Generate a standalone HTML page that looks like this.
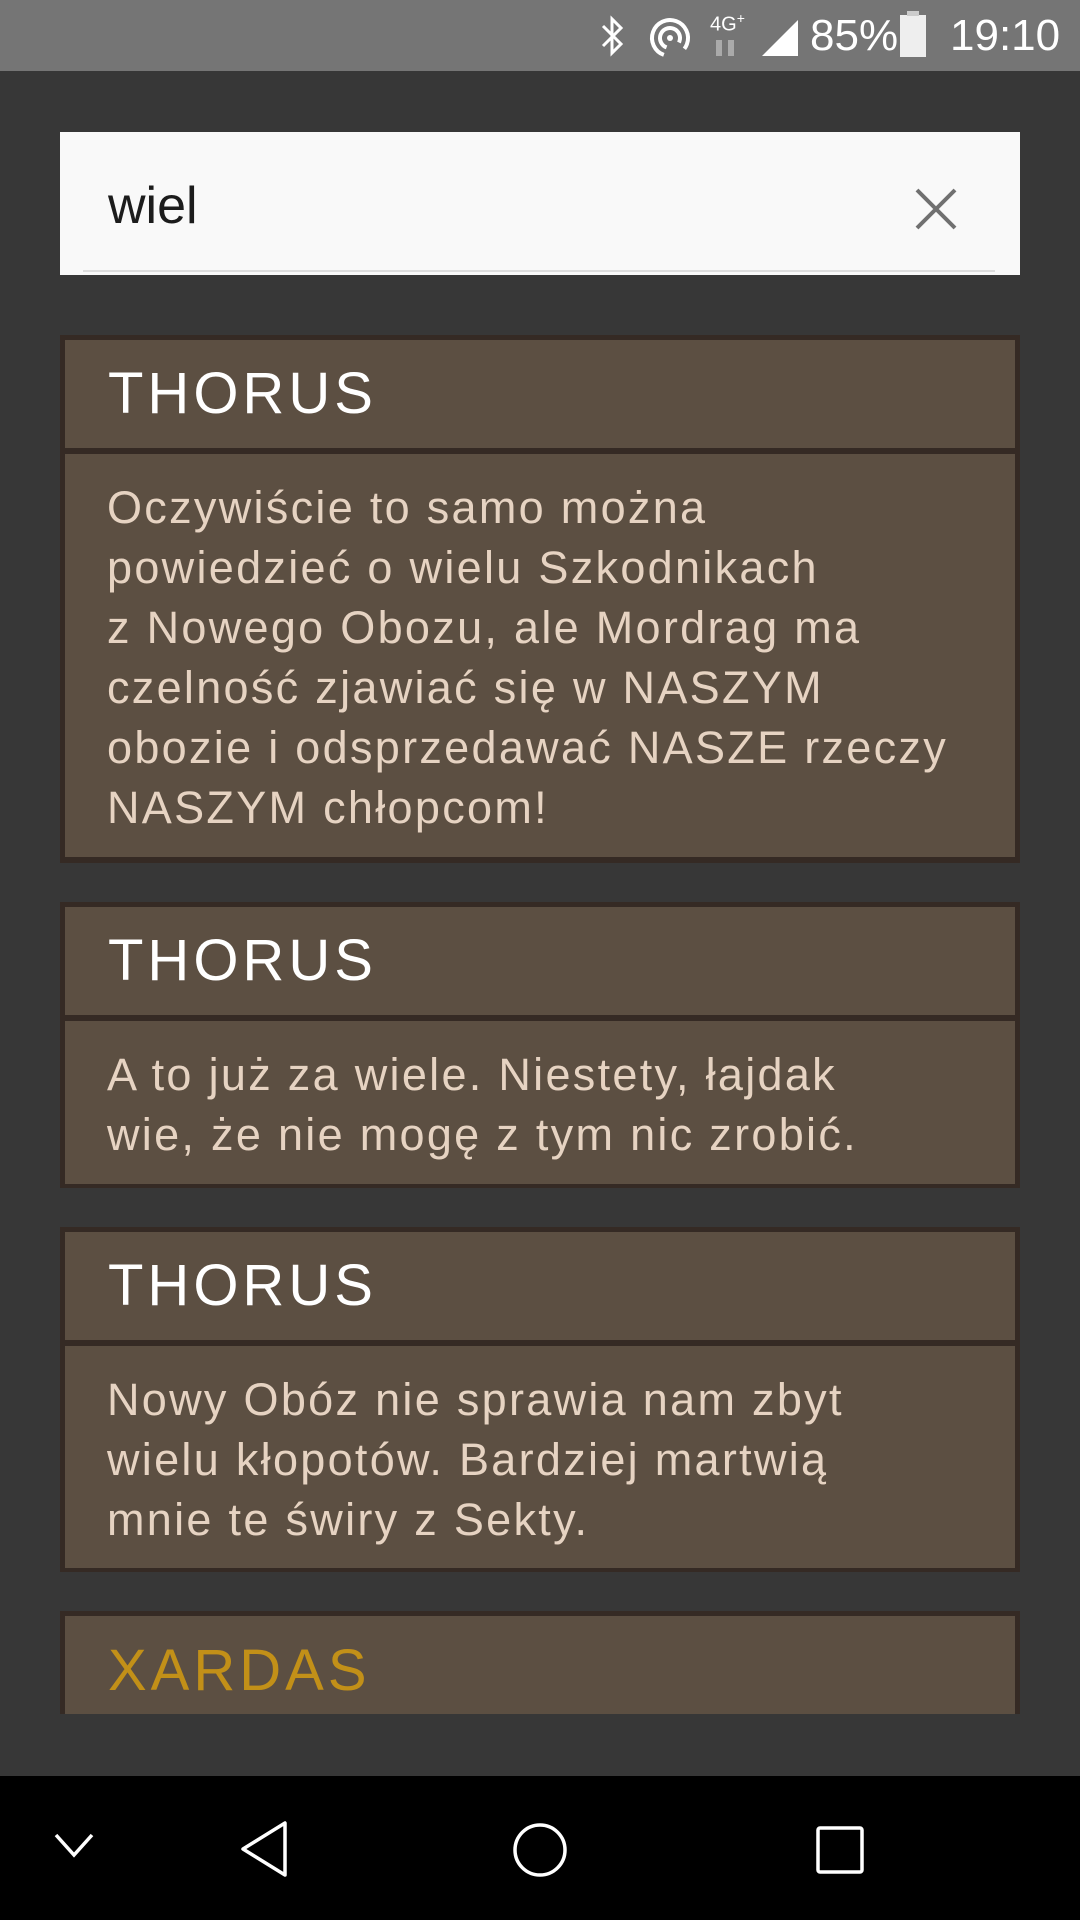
<!DOCTYPE html>
<html><head><meta charset="utf-8"><style>
*{margin:0;padding:0;box-sizing:border-box}
body{width:1080px;height:1920px;background:#373737;position:relative;overflow:hidden;font-family:"Liberation Sans",sans-serif}
.abs{position:absolute}
.status{left:0;top:0;width:1080px;height:71px;background:#757575}
.search{left:60px;top:132px;width:960px;height:143px;background:#f9f9f9}
.card{position:absolute;left:60px;width:960px;background:#352a24;padding:5px}
.hd{background:#5c4f42;height:108px;color:#fff;font-size:58px;letter-spacing:4px;line-height:108px;padding-left:43px;font-weight:300}
.bd{background:#5c4f42;margin-top:6px;color:#e6d3c2;font-size:45px;letter-spacing:2.3px;line-height:60px;padding:24px 0 0 42px;white-space:nowrap}
.nav{left:0;top:1776px;width:1080px;height:144px;background:#000}
</style></head><body>
<div class="abs status">
<svg class="abs" style="left:595px;top:14px" width="34" height="44" viewBox="0 0 34 44"><path d="M8 12 L26 30 L17 39 V5 L26 14 L8 32" fill="none" stroke="#fff" stroke-width="3"/></svg>
<svg class="abs" style="left:648px;top:16px" width="44" height="44" viewBox="0 0 44 44"><circle cx="22" cy="22" r="18" fill="none" stroke="#fff" stroke-width="4" stroke-dasharray="90 23" transform="rotate(110 22 22)"/><circle cx="22" cy="22" r="10" fill="none" stroke="#fff" stroke-width="4" stroke-dasharray="48 15" transform="rotate(110 22 22)"/><circle cx="22" cy="22" r="3" fill="#fff"/></svg>
<div class="abs" style="left:710px;top:10px;color:#fff;font-size:20px">4G<sup style="font-size:14px">+</sup></div>
<div class="abs" style="left:716px;top:40px;width:6px;height:16px;background:#aaa"></div>
<div class="abs" style="left:728px;top:40px;width:6px;height:16px;background:#aaa"></div>
<svg class="abs" style="left:760px;top:16px" width="42" height="42" viewBox="0 0 42 42"><path d="M2 40 L38 4 V40 Z" fill="#fff"/></svg>
<div class="abs" style="left:810px;top:10px;color:#fff;font-size:44px;line-height:52px">85%</div>
<div class="abs" style="left:900px;top:15px;width:26px;height:42px;background:#eee"></div>
<div class="abs" style="left:907px;top:11px;width:12px;height:5px;background:#ccc"></div>
<div class="abs" style="left:950px;top:10px;color:#fff;font-size:44px;line-height:52px">19:10</div>
</div>
<div class="abs search">
<div class="abs" style="left:48px;top:44px;font-size:52px;color:#1c1c1c;line-height:60px">wiel</div>
<svg class="abs" style="left:855px;top:56px" width="42" height="42" viewBox="0 0 42 42"><path d="M2 2 L40 40 M40 2 L2 40" stroke="#707070" stroke-width="4"/></svg>
<div class="abs" style="left:23px;top:138px;width:912px;height:2px;background:#ddd"></div>
</div>
<div class="card" style="top:335px;height:528px"><div class="hd">THORUS</div><div class="bd" style="height:403px">Oczywiście to samo można<br>powiedzieć o wielu Szkodnikach<br>z Nowego Obozu, ale Mordrag ma<br>czelność zjawiać się w NASZYM<br>obozie i odsprzedawać NASZE rzeczy<br>NASZYM chłopcom!</div></div>
<div class="card" style="top:902px;height:286px"><div class="hd">THORUS</div><div class="bd" style="height:163px">A to już za wiele. Niestety, łajdak<br>wie, że nie mogę z tym nic zrobić.</div></div>
<div class="card" style="top:1227px;height:345px"><div class="hd">THORUS</div><div class="bd" style="height:222px">Nowy Obóz nie sprawia nam zbyt<br>wielu kłopotów. Bardziej martwią<br>mnie te świry z Sekty.</div></div>
<div class="card" style="top:1611px;height:103px;padding-bottom:0;overflow:hidden"><div class="hd" style="color:#c29018;height:98px;line-height:110px">XARDAS</div></div>
<div class="abs nav">
<svg class="abs" style="left:52px;top:55px" width="44" height="30" viewBox="0 0 44 30"><path d="M4 4 L22 24 L40 4" fill="none" stroke="#fff" stroke-width="3.5"/></svg>
<svg class="abs" style="left:238px;top:44px" width="54" height="58" viewBox="0 0 54 58"><path d="M47 3 V55 L5 29 Z" fill="none" stroke="#fff" stroke-width="3.5" stroke-linejoin="round"/></svg>
<svg class="abs" style="left:510px;top:44px" width="60" height="60" viewBox="0 0 60 60"><circle cx="30" cy="30" r="25" fill="none" stroke="#fff" stroke-width="3.5"/></svg>
<svg class="abs" style="left:814px;top:48px" width="52" height="52" viewBox="0 0 52 52"><rect x="4" y="4" width="44" height="44" rx="2" fill="none" stroke="#fff" stroke-width="3.5"/></svg>
</div>
</body></html>
